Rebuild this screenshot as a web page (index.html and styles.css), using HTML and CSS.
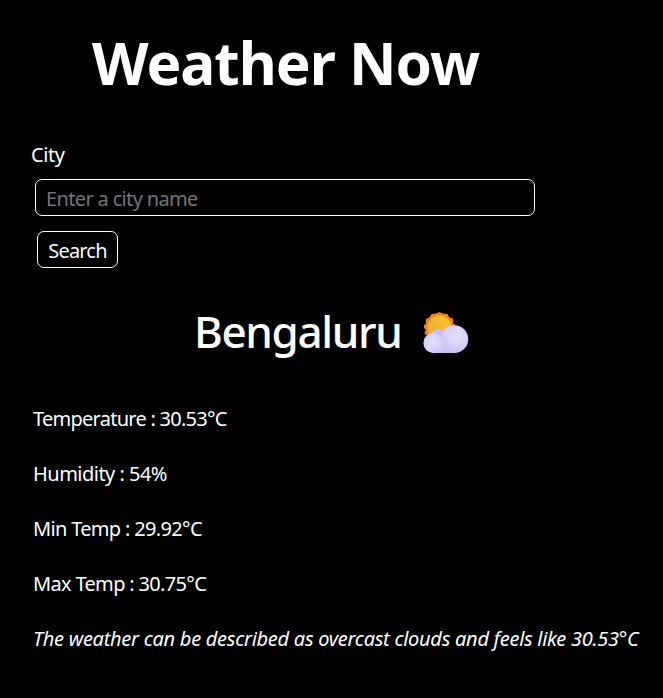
FILE: index.html
```html
<!DOCTYPE html>
<html lang="en">
<head>
<meta charset="utf-8">
<title>Weather Now</title>
<link rel="stylesheet" href="styles.css">
</head>
<body>
<main class="app">
  <h1 class="title">Weather Now</h1>
  <form class="search">
    <label class="label" for="city">City</label>
    <input class="input" id="city" type="text" placeholder="Enter a city name">
    <button class="button" type="button">Search</button>
  </form>
  <section class="weather">
    <h2 class="city"><span class="name">Bengaluru</span>
      <svg class="icon" viewBox="0 0 46 42" aria-hidden="true">
        <defs>
          <linearGradient id="sun" x1="1" y1="0" x2="0" y2="1"><stop offset="0" stop-color="#f9c82e"/><stop offset="1" stop-color="#e8a83a"/></linearGradient>
          <radialGradient id="puff" cx=".62" cy=".35" r=".75"><stop offset="0" stop-color="#e5e0fd"/><stop offset=".5" stop-color="#d9d2fc"/><stop offset="1" stop-color="#c5bbf8"/></radialGradient>
          <radialGradient id="puff-left" cx=".45" cy=".45" r=".6"><stop offset="0" stop-color="#e4dffc"/><stop offset="1" stop-color="#d0c9fb"/></radialGradient>
        </defs>
        <g fill="#f58220">
          <circle cx="16.400" cy="15" r="14"/>
          <circle cx="16.400" cy="2.800" r="2.600"/><circle cx="22.800" cy="4.300" r="2.600"/><circle cx="27.700" cy="8.400" r="2.600"/><circle cx="29.600" cy="14" r="2.600"/>
          <circle cx="10" cy="4.300" r="2.600"/><circle cx="5.300" cy="8.700" r="2.600"/><circle cx="3.500" cy="14.600" r="2.600"/><circle cx="4.300" cy="20.500" r="2.600"/>
        </g>
        <circle cx="16.400" cy="15.500" r="12" fill="url(#sun)"/>
        <circle cx="15" cy="23.500" r="6.500" fill="#c6bdf5"/>
        <path d="M10.500 30h21v11h-21z" fill="#cbc2f8"/>
        <circle cx="31.200" cy="27.200" r="14" fill="url(#puff)"/>
        <circle cx="10.600" cy="31" r="10.200" fill="url(#puff-left)"/>
      </svg>
    </h2>
    <p class="row temperature">Temperature : 30.53°C</p>
    <p class="row humidity">Humidity : 54%</p>
    <p class="row">Min Temp : 29.92°C</p>
    <p class="row">Max Temp : 30.75°C</p>
    <p class="row summary">The weather can be described as overcast clouds and feels like 30.53°C</p>
  </section>
</main>
</body>
</html>
```
FILE: styles.css
```css
body { margin: 0; background: #000; color: #fff; font: 20px/27px "Noto Sans", "Open Sans", sans-serif; }
.app { width: 663px; height: 698px; overflow: hidden; }
.title { margin: 0; padding: 22px 0 0 92px; font-size: 58.5px; line-height: 80px; letter-spacing: -1px; }
.search { display: flex; flex-direction: column; align-items: flex-start; padding: 39px 0 0 31px; }
.label { letter-spacing: -.45px; }
.input { box-sizing: border-box; width: 500px; height: 37px; margin: 11px 0 15px 4px; padding: 2px 10px 0; border: 1px solid #fff; border-radius: 7px; background: #000; color: #fff; font: inherit; letter-spacing: -.65px; }
.input::placeholder { color: #757575; }
.button { box-sizing: border-box; width: 81px; height: 37px; margin-left: 6px; padding: 2px 0 0; border: 1px solid #fff; border-radius: 7px; background: #000; color: #fff; font: inherit; letter-spacing: -.8px; }
.weather { padding-left: 33px; }
.city { display: flex; margin: 33px 0 44px 161px; font-size: 44px; font-weight: 500; line-height: 60px; }
.name { width: 208px; letter-spacing: -1.35px; }
.icon { width: 46px; height: 42px; margin: 11px 0 0 21px; }
.row { margin: 0 0 28px; white-space: nowrap; letter-spacing: -.67px; }
.temperature { letter-spacing: -.74px; }
.humidity { letter-spacing: -.52px; }
.summary { font-style: italic; letter-spacing: -.27px; }
```
